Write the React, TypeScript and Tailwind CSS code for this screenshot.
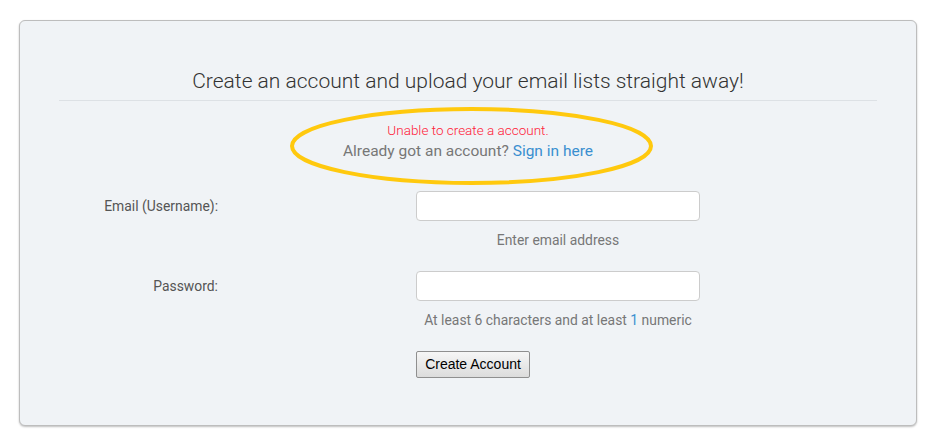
import React from "react";

export default function App() {
  return (
    <div className="relative w-[936px] h-[445px] bg-white pt-[20px] px-[19px]" style={{ fontFamily: "Roboto, 'Noto Sans', sans-serif" }}>
      <div className="h-[406px] rounded-[6px] border border-[#bdbdbd] bg-[#f0f3f6] shadow-[0_1px_2px_rgba(0,0,0,0.25)] px-[39px] pt-[46px]">
        <div className="border-b border-[#dde1e5] pb-[5px]">
          <h1 className="text-center text-[21px] leading-[28px] font-light text-[#333]">
            Create an account and upload your email lists straight away!
          </h1>
        </div>
        <div className="mt-[19px] text-center text-[13.5px] leading-[20px] font-light text-[#ff2038]">
          Unable to create a account.
        </div>
        <div className="text-center text-[15.5px] leading-[22px] text-[#777]">
          Already got an account? <a className="text-[#3a8fd0]">Sign in here</a>
        </div>

        <div className="mt-[29px] flex items-center">
          <label className="w-[159px] text-right text-[13.9px] text-[#555]">Email (Username):</label>
          <div className="ml-[198px] w-[284px] h-[30px] rounded-[4px] border border-[#ccc] bg-white" />
        </div>
        <div className="ml-[357px] mt-[9px] w-[284px] text-center text-[13.9px] leading-[20px] text-[#777]">
          Enter email address
        </div>

        <div className="mt-[21px] flex items-center">
          <label className="w-[159px] text-right text-[13.9px] text-[#555]">Password:</label>
          <div className="ml-[198px] w-[284px] h-[30px] rounded-[4px] border border-[#ccc] bg-white" />
        </div>
        <div className="ml-[357px] mt-[9px] w-[284px] text-center text-[13.9px] leading-[20px] text-[#777]">
          At least 6 characters and at least <span className="text-[#3a8fd0]">1</span> numeric
        </div>

        <div className="ml-[357px] mt-[21px]">
          <button
            className="h-[27px] w-[114px] rounded-[2px] border border-[#8f8f8f] bg-gradient-to-b from-[#f6f6f6] to-[#dcdcdc] text-[14px] text-black"
            style={{ fontFamily: "'Liberation Sans', Arial, sans-serif" }}
          >
            Create Account
          </button>
        </div>
      </div>

      <svg className="absolute left-[286px] top-[104px] pointer-events-none" width="372" height="84" viewBox="0 0 372 84">
        <ellipse cx="185.5" cy="42" rx="179.5" ry="37" fill="none" stroke="#ffc90e" strokeWidth="4" />
      </svg>
    </div>
  );
}
